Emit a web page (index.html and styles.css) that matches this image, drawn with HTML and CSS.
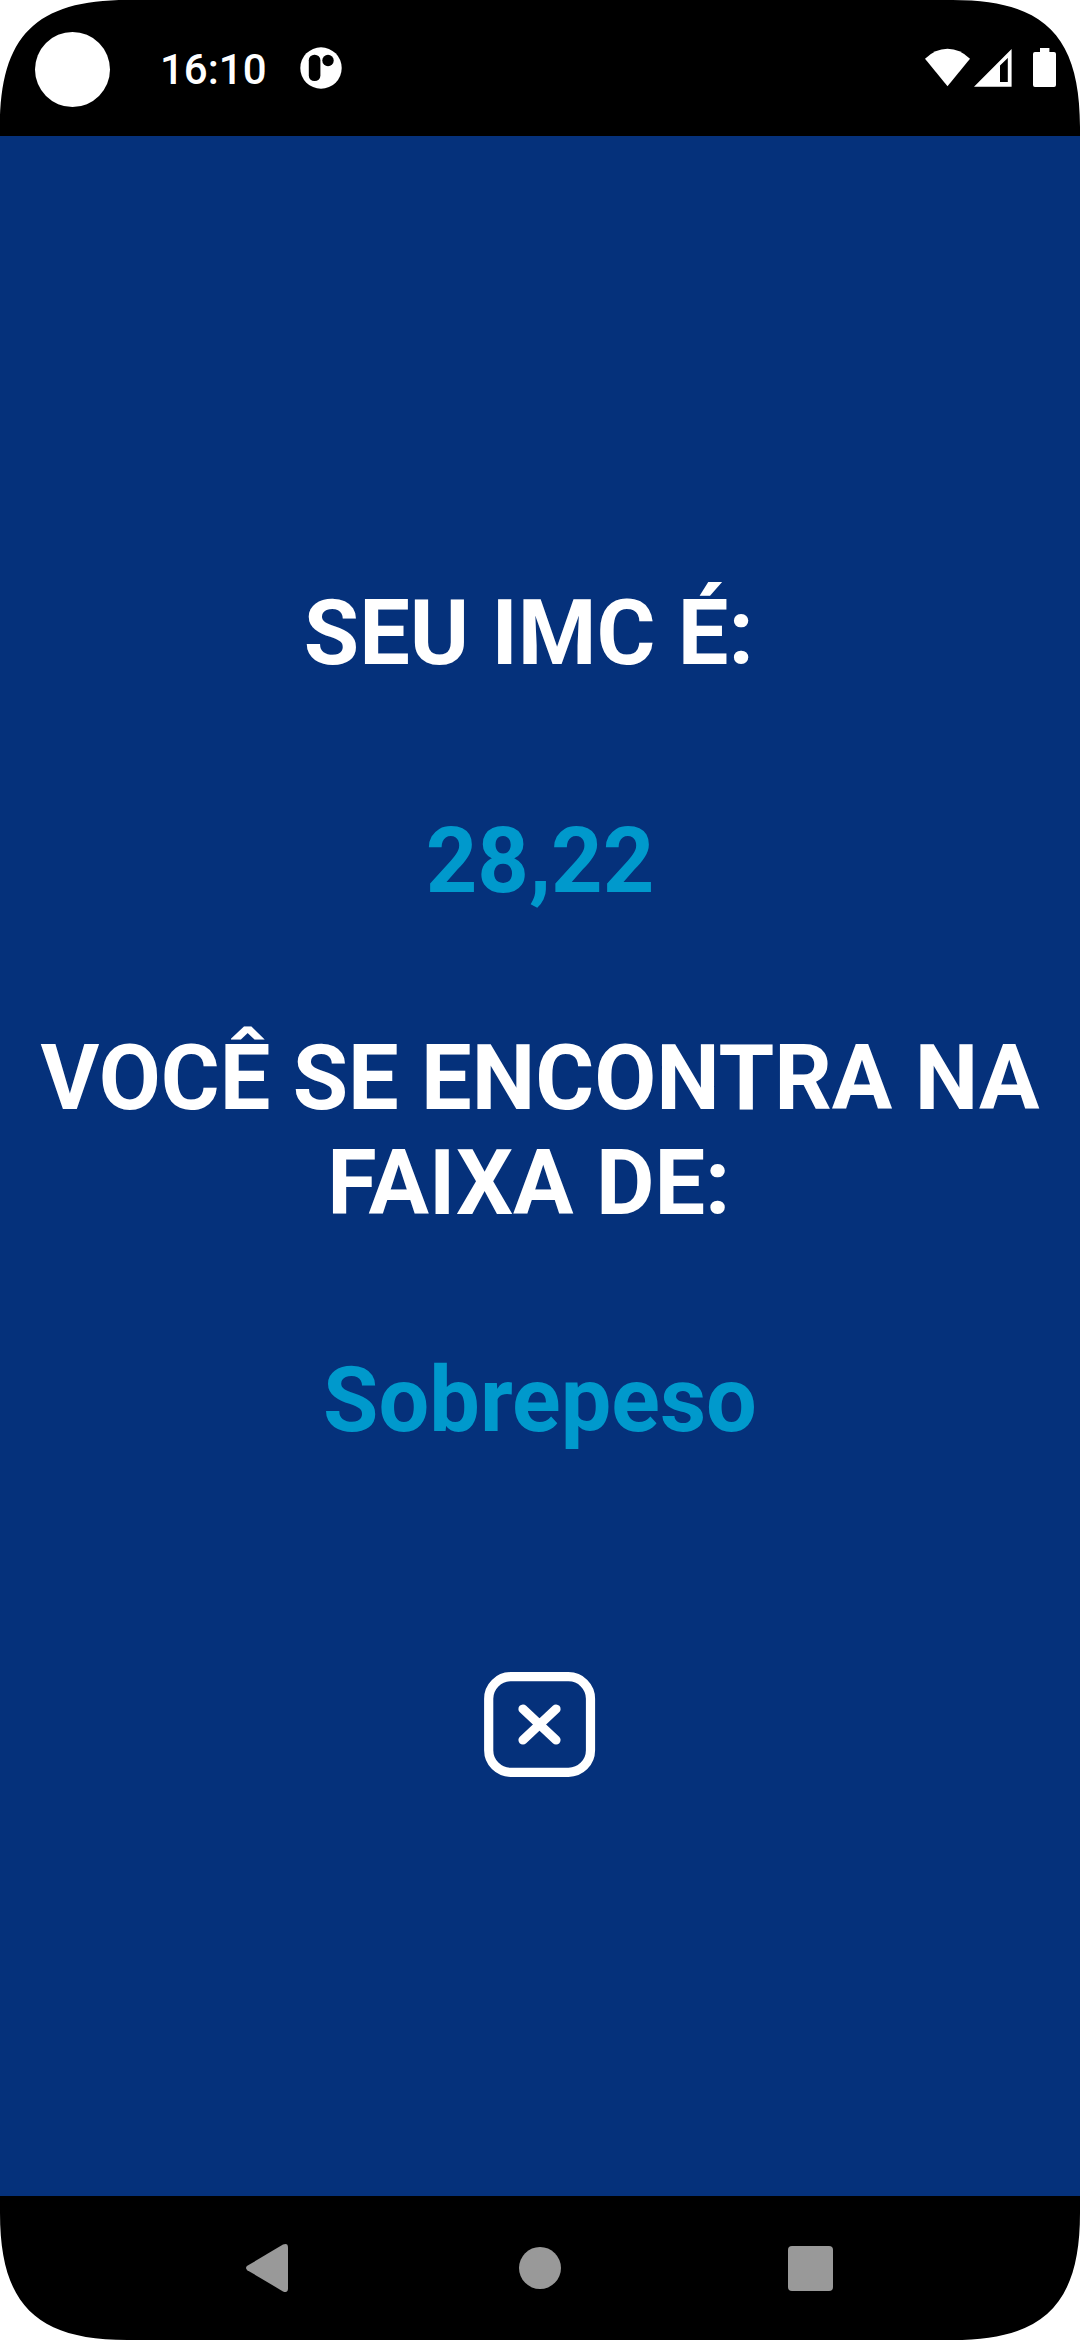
FILE: index.html
```html
<!DOCTYPE html>
<html lang="pt-BR">
<head>
<meta charset="utf-8">
<title>Resultado do IMC</title>
<link rel="stylesheet" href="styles.css">
</head>
<body>
<div class="phone">
  <header class="status">
    <span class="camera"></span>
    <span class="clock">16:10</span>
    <svg class="app-icon" width="42" height="42" viewBox="300 47 42 42">
      <circle cx="321" cy="68" r="20.7" fill="#fff"/>
      <rect x="308.8" y="54.7" width="11.6" height="26.4" rx="5.6"/>
      <circle cx="328" cy="60.5" r="5.7"/>
    </svg>
    <svg class="signals" width="132" height="40" viewBox="925 48 132 40" fill="#fff">
      <path d="M925 58.8Q935 48.7 947.5 48.7T970 58.8L947.5 86.3z"/>
      <path fill-rule="evenodd" d="M974 86.7 1011.6 49V86.7zM1000 65.5V82H1007.8V58z"/>
      <path d="M1040 48h9.4v4h4.6q2 0 2 2v31q0 2-2 2h-19q-2 0-2-2V54q0-2 2-2h5z"/>
    </svg>
  </header>
  <main class="result">
    <h1 class="label">SEU IMC É:&nbsp;</h1>
    <p class="value score">28,22</p>
    <h2 class="label range">VOCÊ SE ENCONTRA NA<br>FAIXA DE:&nbsp;</h2>
    <p class="value category">Sobrepeso</p>
    <button class="close" aria-label="Fechar">
      <svg width="112" height="106" viewBox="484 1672 112 106" fill="none" stroke="#fff" stroke-width="9.2" stroke-linecap="round">
        <rect x="488.7" y="1676.7" width="101.8" height="95.6" rx="22"/>
        <path d="M523 1709 556 1740M556 1709 523 1740"/>
      </svg>
    </button>
  </main>
  <nav class="nav" aria-label="Sistema">
    <svg width="42" height="48" viewBox="246 2244 42 48"><path fill="#999" d="M247.300 2265.800 283 2244.600Q288 2242.700 288 2247.500V2288.500Q288 2293.300 283 2291.400L247.300 2270.200Q244.700 2268 247.300 2265.800z"/></svg>
    <span class="home"></span>
    <span class="recents"></span>
  </nav>
  <svg class="corner top left" viewBox="0 0 127 127"><path d="M0 0V127C0 36 36 0 127 0z"/></svg>
  <svg class="corner top right" viewBox="0 0 127 127"><path d="M0 0V127C0 36 36 0 127 0z"/></svg>
  <svg class="corner bottom left" viewBox="0 0 127 127"><path d="M0 0V127C0 36 36 0 127 0z"/></svg>
  <svg class="corner bottom right" viewBox="0 0 127 127"><path d="M0 0V127C0 36 36 0 127 0z"/></svg>
</div>
</body>
</html>
```
FILE: styles.css
```css
* { box-sizing: border-box; }
body { margin: 0; background: #fff; font-family: Roboto, sans-serif; }
svg { display: block; flex: none; }

.phone {
  position: relative;
  display: flex;
  flex-direction: column;
  width: 1080px;
  height: 2340px;
  overflow: hidden;
  background: #05317b;
}

.status {
  display: flex;
  align-items: flex-start;
  height: 136px;
  padding: 32px 24px 0 35px;
  background: #000;
}
.camera { width: 75px; height: 75px; border-radius: 50%; background: #fff; }
.clock {
  width: 140px;
  margin: 13px 0 0 50px;
  color: #fff;
  font-size: 42px;
  font-weight: 500;
  line-height: 50px;
}
.app-icon { margin-top: 15px; }
.signals { margin: 16px -1px 0 auto; }

.result {
  flex: 1;
  display: flex;
  flex-direction: column;
  align-items: center;
  padding-top: 445px;
  font-size: 90px;
  font-weight: 700;
  line-height: 105px;
  text-align: center;
}
.label, .value { margin: 0; font-size: inherit; font-weight: inherit; white-space: nowrap; }
.label { color: #fff; }
.value { color: #09c; }
.score { margin-top: 123px; }
.range { margin-top: 112px; }
.category { margin-top: 112px; }
.close { margin-top: 219px; padding: 0; border: 0; background: none; }

.nav {
  display: flex;
  align-items: center;
  height: 144px;
  padding-left: 246px;
  background: #000;
}
.home { width: 42px; height: 42px; margin-left: 231px; border-radius: 50%; background: #999; }
.recents { width: 45px; height: 45px; margin-left: 227px; border-radius: 4px; background: #999; }

.corner { position: absolute; width: 127px; height: 127px; fill: #fff; }
.top { top: 0; }
.bottom { bottom: 0; }
.left { left: 0; }
.right { right: 0; }
.top.right { transform: scaleX(-1); }
.bottom.left { transform: scaleY(-1); }
.bottom.right { transform: scale(-1); }
```
